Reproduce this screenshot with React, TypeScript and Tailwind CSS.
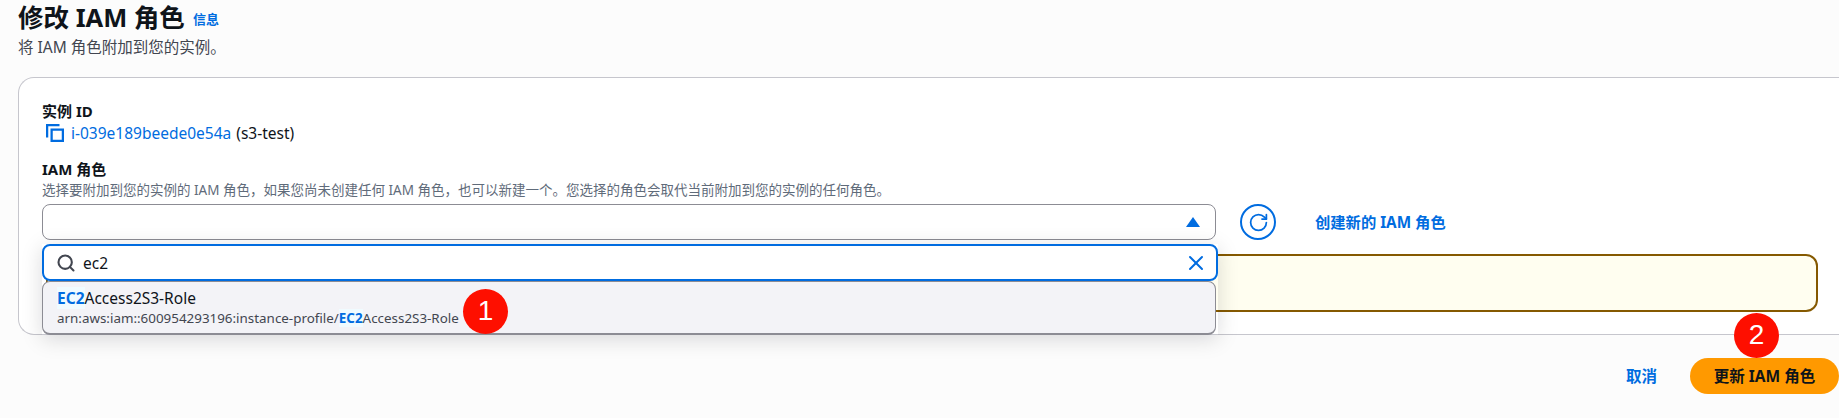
import { RotateCw, Search, X } from 'lucide-react';

function Badge({ n, className }: { n: string; className: string }) {
  return (
    <div
      className={`absolute z-20 flex h-[45px] w-[45px] items-center justify-center rounded-full bg-[#fe0f00] pb-[2px] font-['Liberation_Sans',sans-serif] text-[28px] text-white ${className}`}
    >
      {n}
    </div>
  );
}

function Hit() {
  return <span className="bg-[#f0fbff] font-bold text-[#006ce0]">EC2</span>;
}

export default function App() {
  return (
    <div className="relative h-[418px] w-[1839px] overflow-hidden bg-[#fcfcfc] pl-[18px] font-['Noto_Sans','Noto_Sans_CJK_SC',sans-serif] text-[15.5px] leading-[20px] text-[#0f141a]">
      <div className="flex h-[34px] items-center">
        <h1 className="text-[25.5px] leading-[34px] font-bold">修改 IAM 角色</h1>
        <a className="mt-[4px] ml-[8px] text-[13px] font-bold text-[#006ce0]">信息</a>
      </div>
      <p className="mt-[3px] text-[#424650]">将 IAM 角色附加到您的实例。</p>

      <div className="mt-[20px] h-[258px] rounded-l-[16px] border border-r-0 border-[#c6c6cd] bg-white pt-[23px] pl-[23px]">
        <div className="text-[15px] font-bold">实例 ID</div>
        <div className="mt-[2px] flex items-center">
          <svg viewBox="0 0 16 16" className="ml-[4px] h-[18px] w-[18px] fill-none stroke-[#006ce0] stroke-2">
            <path d="M1 12V1h11" />
            <rect x="5" y="5" width="10" height="10" />
          </svg>
          <a className="ml-[7px] text-[#006ce0]">i-039e189beede0e54a</a>
          <span className="ml-[5px]">(s3-test)</span>
        </div>

        <div className="mt-[16px] text-[15px] font-bold">IAM 角色</div>
        <div className="mt-[1px] text-[13.5px] leading-[20px] text-[#5f6b7a]">
          选择要附加到您的实例的 IAM 角色，如果您尚未创建任何 IAM 角色，也可以新建一个。您选择的角色会取代当前附加到您的实例的任何角色。
        </div>

        <div className="mt-[4px] flex items-center">
          <div className="relative w-[1174px]">
            <div className="flex h-[36px] items-center justify-end rounded-[8px] border border-[#8c8c94] bg-white pr-[15px]">
              <svg viewBox="0 0 14 10" className="h-[10px] w-[14px] fill-[#006ce0]">
                <path d="M7 0l7 10H0z" />
              </svg>
            </div>
            <div className="absolute top-[40px] -right-[2px] left-0 z-10 shadow-[0_4px_20px_rgba(0,7,22,0.15)]">
              <div className="flex h-[37px] items-center rounded-[8px] border-2 border-[#006ce0] bg-white pr-[8px] pl-[12px]">
                <Search size={20} strokeWidth={2.5} className="text-[#424650]" />
                <span className="ml-[7px]">ec2</span>
                <X size={24} strokeWidth={2} className="ml-auto text-[#006ce0]" />
              </div>
              <div className="mr-[2px] h-[54px] rounded-[8px] border border-b-2 border-[#8c8c94] bg-[#f3f3f7] pt-[6px] pl-[14px]">
                <div>
                  <Hit />
                  Access2S3-Role
                </div>
                <div className="text-[13.4px] text-[#424650]">
                  arn:aws:iam::600954293196:instance-profile/
                  <Hit />
                  Access2S3-Role
                </div>
              </div>
            </div>
          </div>
          <button className="ml-[24px] flex h-[36px] w-[36px] items-center justify-center rounded-full border-2 border-[#006ce0] bg-white text-[#006ce0]">
            <RotateCw size={21} strokeWidth={2} />
          </button>
          <a className="ml-[39px] text-[15.3px] font-bold text-[#006ce0]">创建新的 IAM 角色</a>
        </div>

        <div className="mt-[14px] mr-[21px] ml-[4px] h-[58px] rounded-[12px] border-2 border-[#855900] bg-[#fffef0]" />
      </div>

      <div className="mt-[23px] flex items-center justify-end">
        <a className="font-bold text-[#006ce0]">取消</a>
        <button className="ml-[33px] h-[36px] w-[149px] rounded-full bg-[#ff9900] font-bold">更新 IAM 角色</button>
      </div>

      <Badge n="1" className="top-[289px] left-[463px]" />
      <Badge n="2" className="top-[313px] left-[1734px]" />
    </div>
  );
}
